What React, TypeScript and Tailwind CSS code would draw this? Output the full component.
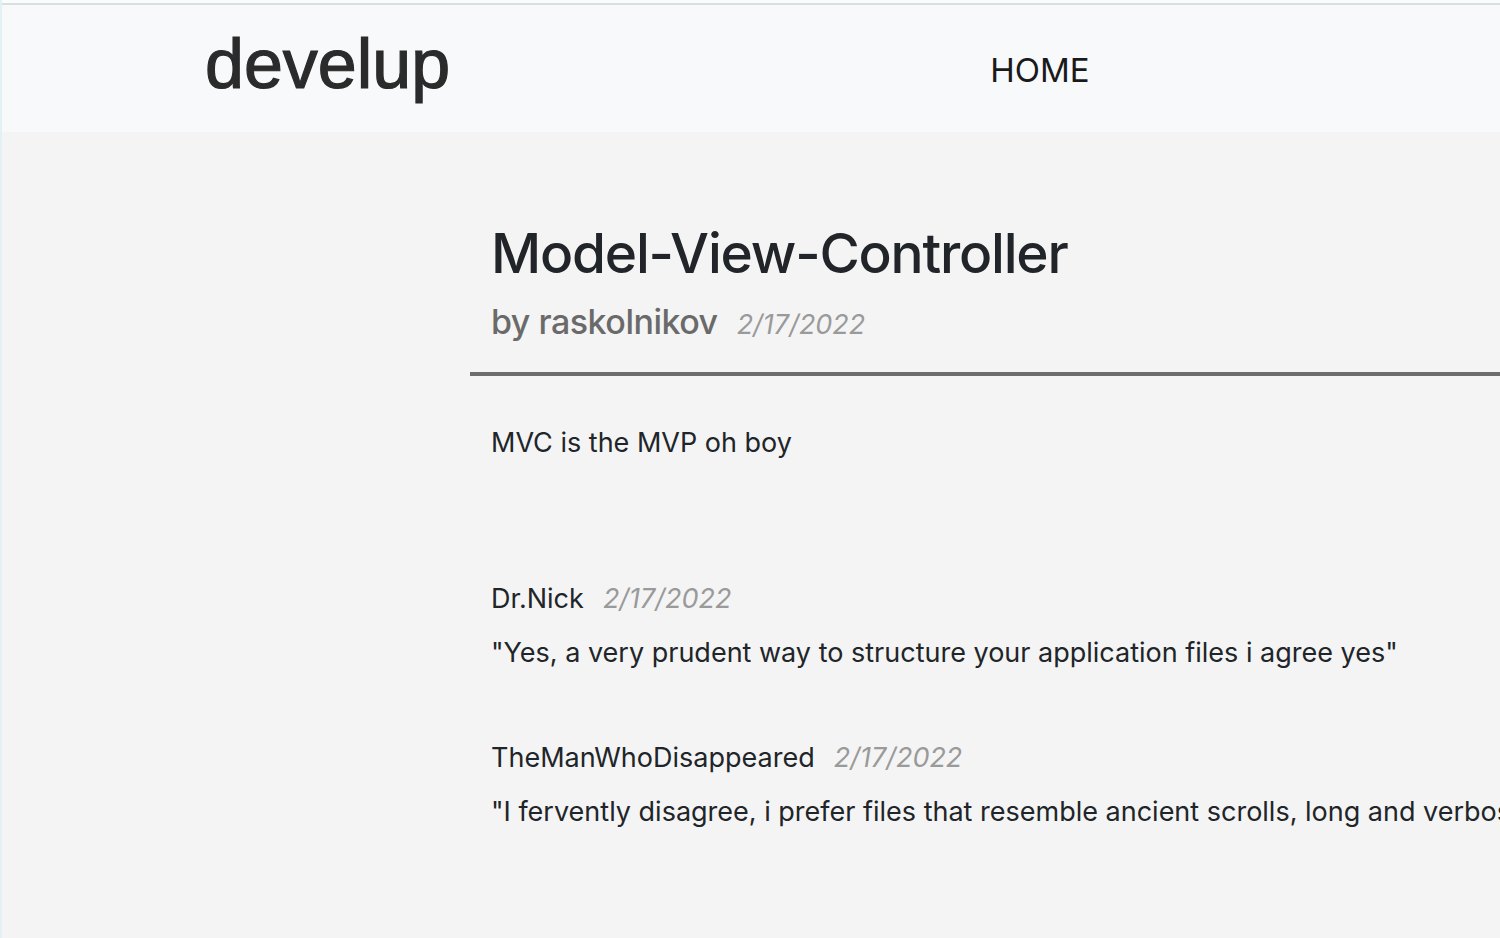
const comments = [
  {
    user: "Dr.Nick",
    date: "2/17/2022",
    text: "\"Yes, a very prudent way to structure your application files i agree yes\"",
  },
  {
    user: "TheManWhoDisappeared",
    date: "2/17/2022",
    text: "\"I fervently disagree, i prefer files that resemble ancient scrolls, long and verbose, winding on and on\"",
  },
];

export default function App() {
  return (
    <div className="w-[1500px] h-[938px] overflow-hidden bg-[#f4f4f4] border-l-2 border-[#e3f1f4] font-['Inter',sans-serif]">
      <div className="h-[3px] bg-[#fbfcfc]" />
      <div className="h-[2px] bg-[#d7dfe2]" />

      {/* Header */}
      <header className="h-[127px] bg-[#f8f9fa] flex items-start">
        <a className="ml-[203px] mt-[24px] font-['Liberation_Sans',Arial,sans-serif] text-[70px] leading-[70px] text-[#2b2b2b] [-webkit-text-stroke:1.2px_#2b2b2b]">
          develup
        </a>
        <nav className="ml-[540px] mt-[49px]">
          <a className="text-[33px] leading-[33px] text-[#1a1a1a]">HOME</a>
        </nav>
      </header>

      {/* Post */}
      <main className="pl-[468px] pt-[94px]">
        <div className="px-[21px]">
          <h1 className="text-[55px] leading-[55px] font-medium text-[#212529] tracking-[-1.2px]">
            Model-View-Controller
          </h1>
          <div className="mt-[24px] flex items-baseline gap-[19px] text-[34px] leading-[34px]">
            <span className="font-medium text-[#6a6a6a] tracking-[-0.5px]">by raskolnikov</span>
            <span className="italic text-[#9a9a9a] text-[27px]">2/17/2022</span>
          </div>
        </div>
        <div className="mt-[30px] h-[4px] bg-[#6d6d6d]" />

        <div className="px-[21px] whitespace-nowrap">
          <p className="mt-[53px] text-[27px] leading-[27px] text-[#212529]">MVC is the MVP oh boy</p>

          <div className="mt-[129px] flex flex-col gap-[78px]">
            {comments.map((c) => (
              <div key={c.user} className="flex flex-col gap-[27px]">
                <div className="flex items-baseline gap-[19px] text-[27px] leading-[27px]">
                  <span className="text-[#212529]">{c.user}</span>
                  <span className="italic text-[#9a9a9a]">{c.date}</span>
                </div>
                <p className="text-[27px] leading-[27px] text-[#212529]">{c.text}</p>
              </div>
            ))}
          </div>
        </div>
      </main>
    </div>
  );
}
